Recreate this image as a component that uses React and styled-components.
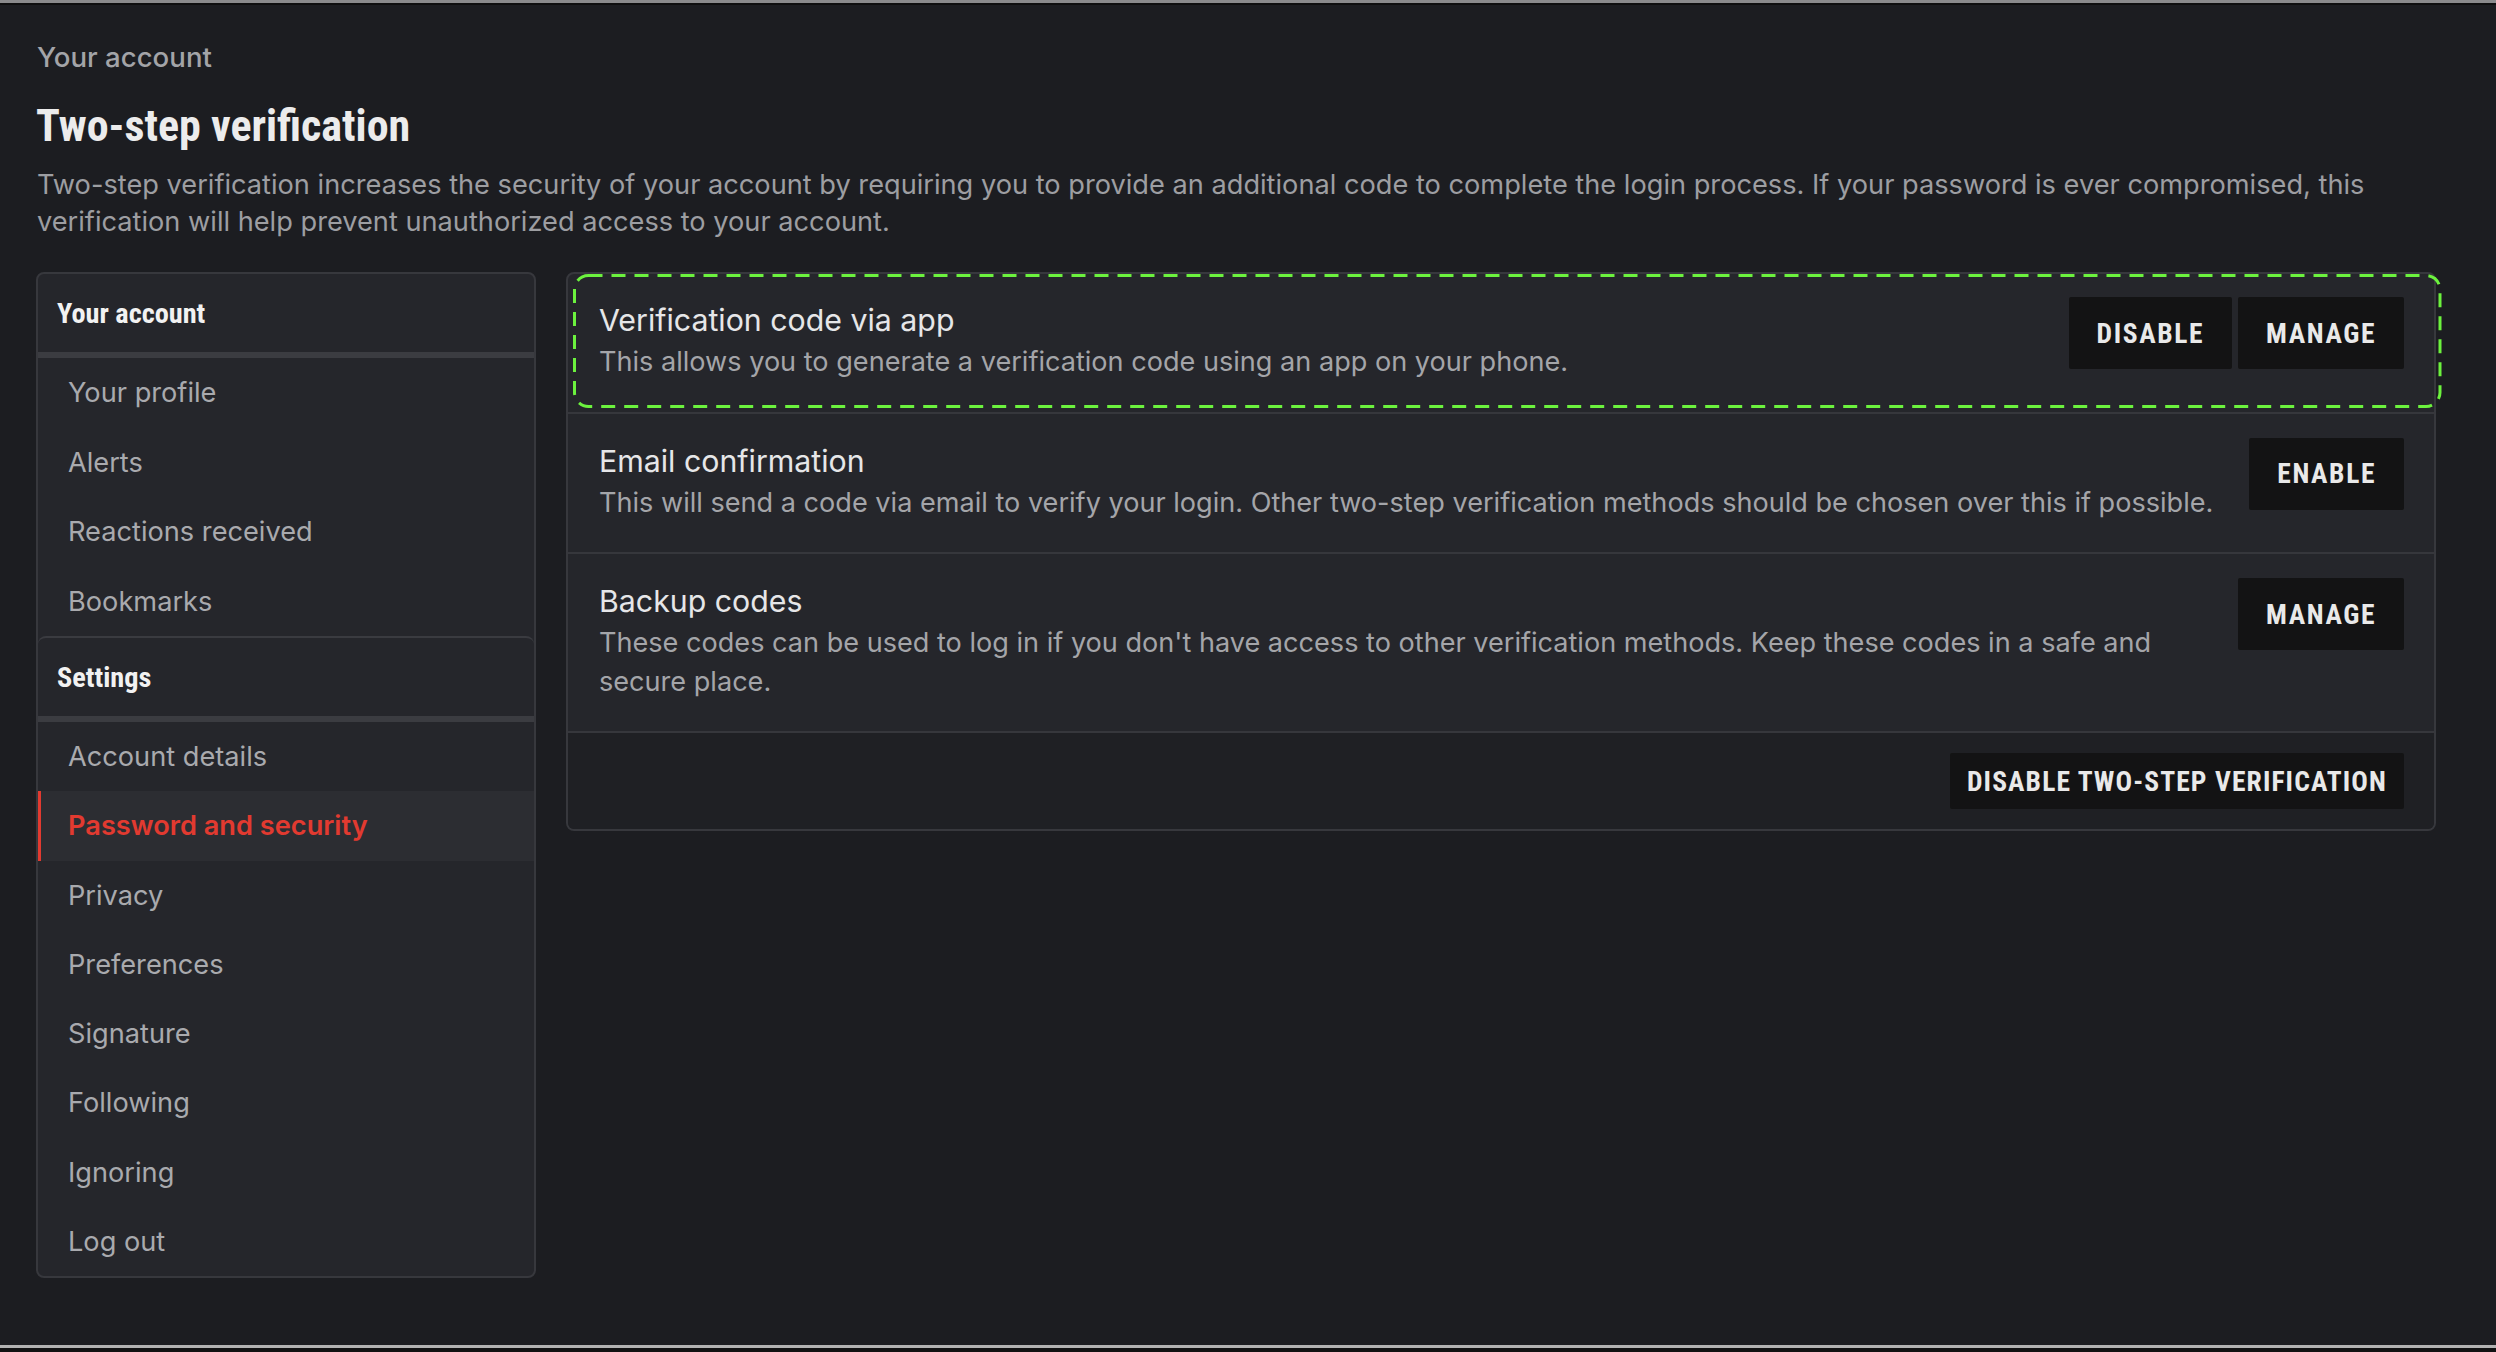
import React from "react";
import styled, { createGlobalStyle } from "styled-components";

const Global = createGlobalStyle`
  html, body { margin: 0; padding: 0; background: #1c1d21; }
  body { font-family: Inter, "Noto Sans", sans-serif; -webkit-font-smoothing: antialiased; }
  * { box-sizing: border-box; }
`;

const COND = `"Roboto Condensed", "Liberation Sans Narrow", "DejaVu Sans Condensed", Roboto, sans-serif`;

const Frame = styled.div`
  height: 1352px;
  display: flex;
  flex-direction: column;
  background: #1c1d21;
  overflow: hidden;
`;

const TopEdge = styled.div`
  height: 5px;
  flex: none;
  border-top: 3px solid #8b8b8d;
  background: #0f0f10;
`;

const BottomEdge = styled.div`
  height: 7px;
  flex: none;
  border-top: 3px solid #b2b2b2;
  background: #111112;
`;

const Content = styled.main`
  flex: 1;
  padding: 35px 60px 0 36px;
`;

const Breadcrumb = styled.div`
  font-size: 27.6px;
  line-height: 34px;
  font-weight: 500;
  color: #a3a4a8;
  padding-left: 1px;
`;

const Title = styled.h1`
  margin: 24px 0 0;
  font-family: ${COND};
  font-weight: 700;
  font-size: 44px;
  line-height: 56px;
  color: #ececec;
`;

const Intro = styled.p`
  margin: 12px 0 0;
  font-size: 27.2px;
  line-height: 37px;
  color: #9d9ea2;
  padding-left: 1px;
`;

const Layout = styled.div`
  margin-top: 32px;
  display: flex;
  align-items: flex-start;
  gap: 30px;
`;

const Sidebar = styled.nav`
  width: 500px;
  flex: none;
  background: #25262b;
  border: 2px solid #37383d;
  border-radius: 8px;
  overflow: hidden;
`;

const NavBlock = styled.div`
  ${(p) =>
    p.$nested &&
    `
    border-top: 2px solid #3a3b40;
    border-radius: 8px 8px 0 0;
  `}
`;

const NavHeader = styled.div`
  height: 78px;
  display: flex;
  align-items: center;
  padding-left: 19px;
  font-family: ${COND};
  font-weight: 700;
  font-size: 28.3px;
  color: #f2f2f2;
  border-bottom: 6px solid #3b3c41;
  box-sizing: content-box;
`;

const NavItem = styled.a`
  position: relative;
  display: flex;
  align-items: center;
  height: ${(p) => p.$h}px;
  padding-left: 30px;
  font-size: 27.2px;
  font-weight: ${(p) => (p.$active ? 600 : 400)};
  color: ${(p) => (p.$active ? "#e23a30" : "#a9aaae")};
  background: ${(p) => (p.$active ? "#2c2d32" : "transparent")};
  text-decoration: none;
  &::before {
    content: "";
    display: ${(p) => (p.$active ? "block" : "none")};
    position: absolute;
    left: -2px;
    top: 0;
    bottom: 0;
    width: 5px;
    background: #e23a30;
  }
`;

const Panel = styled.section`
  flex: 1;
  background: #25262b;
  border: 2px solid #37383d;
  border-radius: 8px;
`;

const Row = styled.div`
  position: relative;
  display: flex;
  align-items: flex-start;
  gap: 32px;
  padding: ${(p) => p.$pt}px 30px 30px 31px;
  border-bottom: 2px solid #36373c;
`;

const RowText = styled.div`
  flex: 1;
  min-width: 0;
`;

const RowTitle = styled.div`
  font-size: 30.3px;
  line-height: 42px;
  color: #e6e6e8;
`;

const RowDesc = styled.div`
  margin-top: 2px;
  font-size: 27.1px;
  line-height: 38.5px;
  color: #a4a5a9;
`;

const Actions = styled.div`
  display: flex;
  gap: 6px;
  flex: none;
  margin-top: -2px;
`;

const Button = styled.button`
  height: ${(p) => (p.$small ? 56 : 72)}px;
  padding: 0 ${(p) => (p.$small ? 17 : 28)}px;
  border: none;
  border-radius: 2px;
  background: #131314;
  color: #e9e9e9;
  font-family: ${COND};
  font-weight: 700;
  font-size: 27.5px;
  letter-spacing: ${(p) => (p.$small ? 1.1 : 1.6)}px;
  text-transform: uppercase;
  cursor: pointer;
`;

const Footer = styled.div`
  display: flex;
  justify-content: flex-end;
  padding: 20px 30px 20px 31px;
  background: #1f2024;
  border-radius: 0 0 6px 6px;
`;

const Highlight = styled.svg`
  position: absolute;
  left: 5px;
  top: 0;
  overflow: visible;
  pointer-events: none;
`;

const accountItems = ["Your profile", "Alerts", "Reactions received", "Bookmarks"];
const settingsItems = [
  "Account details",
  "Password and security",
  "Privacy",
  "Preferences",
  "Signature",
  "Following",
  "Ignoring",
  "Log out",
];

const rows = [
  {
    title: "Verification code via app",
    desc: "This allows you to generate a verification code using an app on your phone.",
    actions: ["Disable", "Manage"],
    highlight: true,
  },
  {
    title: "Email confirmation",
    desc: "This will send a code via email to verify your login. Other two-step verification methods should be chosen over this if possible.",
    actions: ["Enable"],
  },
  {
    title: "Backup codes",
    desc: "These codes can be used to log in if you don't have access to other verification methods. Keep these codes in a safe and secure place.",
    actions: ["Manage"],
  },
];

export default function App() {
  return (
    <>
      <Global />
      <Frame>
        <TopEdge />
        <Content>
          <Breadcrumb>Your account</Breadcrumb>
          <Title>Two-step verification</Title>
          <Intro>
            Two-step verification increases the security of your account by requiring you to provide an
            additional code to complete the login process. If your password is ever compromised, this
            verification will help prevent unauthorized access to your account.
          </Intro>
          <Layout>
            <Sidebar>
              <NavBlock>
                <NavHeader>Your account</NavHeader>
                {accountItems.map((t) => (
                  <NavItem key={t} $h={69.5}>
                    {t}
                  </NavItem>
                ))}
              </NavBlock>
              <NavBlock $nested>
                <NavHeader>Settings</NavHeader>
                {settingsItems.map((t) => (
                  <NavItem key={t} $h={69.25} $active={t === "Password and security"}>
                    {t}
                  </NavItem>
                ))}
              </NavBlock>
            </Sidebar>
            <Panel>
              {rows.map((r, i) => (
                <Row key={r.title} $pt={i === 0 ? 25 : 26}>
                  <RowText>
                    <RowTitle>{r.title}</RowTitle>
                    <RowDesc>{r.desc}</RowDesc>
                  </RowText>
                  <Actions>
                    {r.actions.map((a) => (
                      <Button key={a}>{a}</Button>
                    ))}
                  </Actions>
                  {r.highlight && (
                    <Highlight width="1869" height="134">
                      <rect
                        x="1.5"
                        y="1.5"
                        width="1865.5"
                        height="131"
                        rx="14"
                        fill="none"
                        stroke="#6cf23e"
                        strokeWidth="3"
                        strokeDasharray="14 9"
                      />
                    </Highlight>
                  )}
                </Row>
              ))}
              <Footer>
                <Button $small>Disable two-step verification</Button>
              </Footer>
            </Panel>
          </Layout>
        </Content>
        <BottomEdge />
      </Frame>
    </>
  );
}
